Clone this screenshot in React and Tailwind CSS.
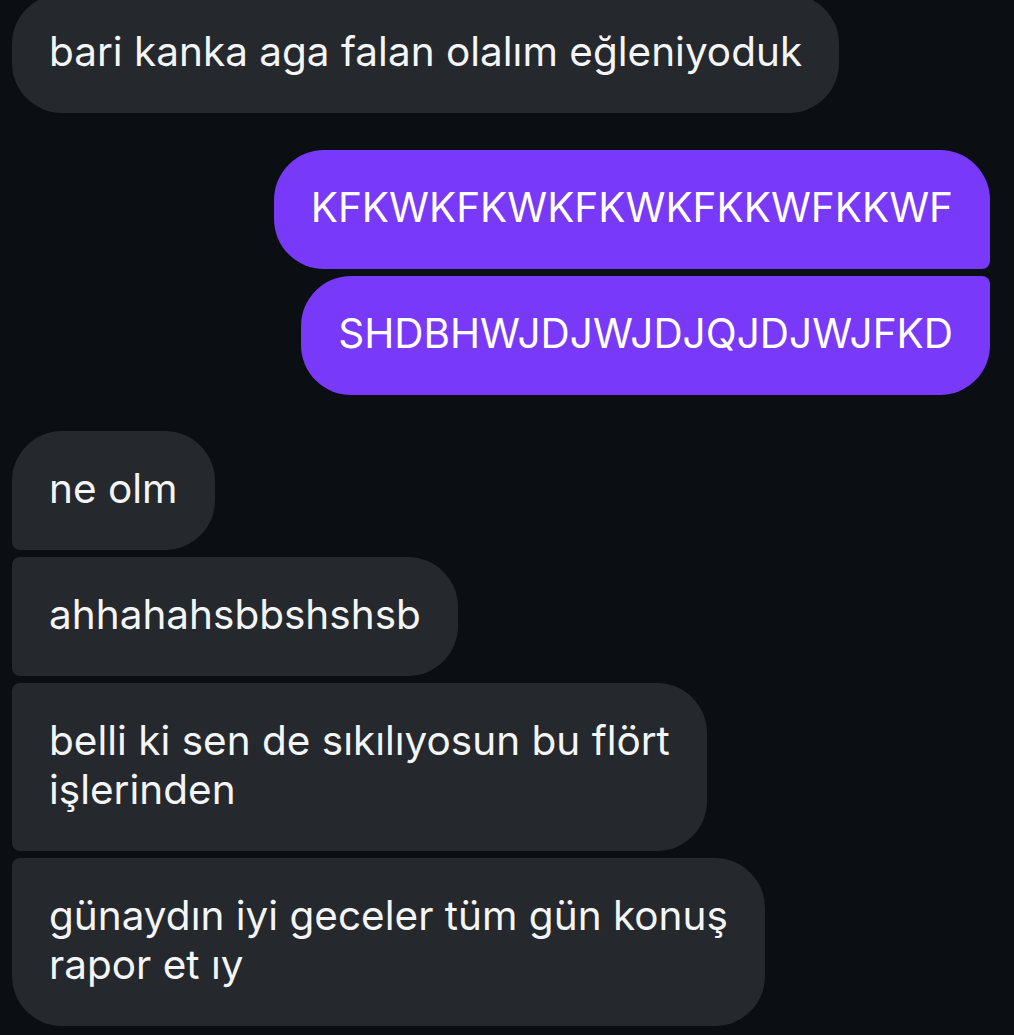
const grayBase = "bg-[#25282c] text-[#f4f5f6] px-[37px] pt-[33px] pb-[37px] leading-[49px]";
const purpleBase = "bg-[#7839f9] text-white px-[37px] pt-[33px] pb-[37px] leading-[49px]";

function Bubble({ className, children }) {
    return <div className={`w-fit text-[40.5px] whitespace-nowrap ${className}`}>{children}</div>;
}

export default function App() {
    return (
        <div className="min-h-[1035px] bg-[#0b0f13] overflow-hidden font-['Inter','Noto_Sans',sans-serif]">
            <div className="flex flex-col -mt-[6px]">
                {/* ilk grup */}
                <div className="flex flex-col pl-3">
                    <Bubble className={`${grayBase} rounded-[50px]`}>
                        bari kanka aga falan olalım eğleniyoduk
                    </Bubble>
                </div>

                {/* gönderilenler */}
                <div className="flex flex-col items-end gap-[7px] pr-6 mt-[37px]">
                    <Bubble className={`${purpleBase} rounded-[50px] rounded-br-[8px]`}>
                        KFKWKFKWKFKWKFKKWFKKWF
                    </Bubble>
                    <Bubble className={`${purpleBase} bg-[#7240f8] rounded-[50px] rounded-tr-[8px]`}>
                        SHDBHWJDJWJDJQJDJWJFKD
                    </Bubble>
                </div>

                {/* gelenler */}
                <div className="flex flex-col gap-[7px] pl-3 mt-[36px]">
                    <Bubble className={`${grayBase} rounded-[50px] rounded-bl-[8px]`}>ne olm</Bubble>
                    <Bubble className={`${grayBase} rounded-[50px] rounded-l-[8px]`}>ahhahahsbbshshsb</Bubble>
                    <Bubble className={`${grayBase} rounded-[50px] rounded-l-[8px]`}>
                        belli ki sen de sıkılıyosun bu flört
                        <br />
                        işlerinden
                    </Bubble>
                    <Bubble className={`${grayBase} rounded-[50px] rounded-tl-[8px]`}>
                        günaydın iyi geceler tüm gün konuş
                        <br />
                        rapor et ıy
                    </Bubble>
                </div>
            </div>
        </div>
    );
}
